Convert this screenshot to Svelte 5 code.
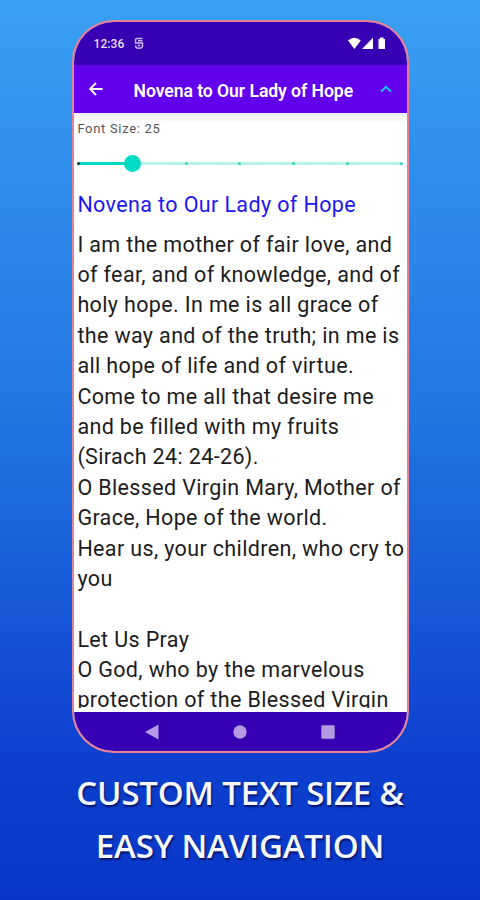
<script>
	let time = "12:36";
	let title = "Novena to Our Lady of Hope";
	let fontSize = 25;
	let ticks = [0, 1, 2, 3, 4, 5, 6];

	let lines = [
		"I am the mother of fair love, and",
		"of fear, and of knowledge, and of",
		"holy hope. In me is all grace of",
		"the way and of the truth; in me is",
		"all hope of life and of virtue.",
		"Come to me all that desire me",
		"and be filled with my fruits",
		"(Sirach 24: 24-26).",
		"O Blessed Virgin Mary, Mother of",
		"Grace, Hope of the world.",
		"Hear us, your children, who cry to",
		"you",
		"",
		"Let Us Pray",
		"O God, who by the marvelous",
		"protection of the Blessed Virgin"
	];
</script>

<main>
	<div class="phone">
		<div class="status">
			<span class="time">{time}</span>
			<svg class="notification" width="10" height="13" viewBox="0 0 10 13">
				<path
					d="M8.4 1.4H2.8Q1.5 1.4 1.5 2.8V5.9H8.5V8.4Q8.5 11.2 5 11.2Q1.5 11.2 1.5 8.4M4 3.7H8.4M3.8 8.5H6.2"
					fill="none"
					stroke="#c9b9ef"
					stroke-width="1.5"
				/>
			</svg>
			<svg class="signals" width="38" height="13" viewBox="0 0 38 13">
				<path d="M0 3.4Q6.4-1.8 12.8 3.4L6.4 12Z" />
				<path d="M14 12L25 0.8V12Z" />
				<path d="M30.5 2H32V0.6H35.5V2H37V12H30.5Z" />
			</svg>
		</div>

		<header>
			<svg class="back" width="14" height="14" viewBox="0 0 14 14">
				<path d="M13.6 7H1.4M7 1L1 7L7 13" />
			</svg>
			<h1>{title}</h1>
			<svg class="collapse" width="12" height="8" viewBox="0 0 12 8">
				<path d="M1 6.6L6 1.8L11 6.6" />
			</svg>
		</header>

		<div class="content">
			<div class="size">Font Size: {fontSize}</div>
			<div class="slider">
				<div class="fill"></div>
				{#each ticks as tick}
					<i class:first={tick === 0} style="left: {(tick / 6) * 100}%"></i>
				{/each}
				<b></b>
			</div>
			<h2>{title}</h2>
			<div class="prayer">
				{#each lines as line}
					<p>{line}</p>
				{/each}
			</div>
		</div>

		<nav>
			<svg width="14" height="16" viewBox="0 0 14 16"><path d="M0 8L13.5 0.5V15.5Z" /></svg>
			<svg width="14" height="14" viewBox="0 0 14 14"><circle cx="7" cy="7" r="6.7" /></svg>
			<svg width="14" height="14" viewBox="0 0 14 14">
				<rect x="0.3" y="0.3" width="13.4" height="13.4" rx="1" />
			</svg>
		</nav>
	</div>

	<div class="caption">
		<div>CUSTOM TEXT SIZE &amp;</div>
		<div>EASY NAVIGATION</div>
	</div>
</main>

<style>
	:global(body) {
		margin: 0;
	}
	main {
		width: 480px;
		height: 900px;
		box-sizing: border-box;
		padding-top: 20px;
		overflow: hidden;
		background: linear-gradient(#38a0f2, #2277e4 45%, #0d40cf 84%, #0837c8);
		font-family: Roboto, sans-serif;
	}
	.phone {
		width: 337px;
		height: 733px;
		margin-left: 72px;
		box-sizing: border-box;
		border: 2.5px solid #e58297;
		border-radius: 42px;
		background: #fff;
		display: flex;
		flex-direction: column;
		overflow: hidden;
	}
	.status {
		height: 43px;
		flex: none;
		display: flex;
		align-items: center;
		padding: 0 21px 0 19.5px;
		background: #3700b3;
	}
	.time {
		color: #e7dff8;
		font-size: 12px;
		font-weight: 500;
		letter-spacing: 0.1px;
	}
	.notification {
		margin-left: 10px;
	}
	.signals {
		margin-left: auto;
		fill: #fff;
	}
	header {
		height: 48px;
		flex: none;
		display: flex;
		align-items: center;
		padding: 0 15px 0 14.5px;
		background: #6200ee;
	}
	header svg {
		fill: none;
		stroke: #fff;
		stroke-width: 1.8;
	}
	header .collapse {
		margin-left: auto;
		stroke: #18cdf0;
		stroke-width: 2;
	}
	h1 {
		margin: 3px 0 0 31px;
		color: #fff;
		font-size: 17.6px;
		font-weight: 600;
		letter-spacing: -0.06px;
		white-space: nowrap;
	}
	.content {
		height: 599px;
		flex: none;
		box-sizing: border-box;
		display: flex;
		flex-direction: column;
		padding: 0 2px 4px 3.4px;
		background: linear-gradient(#eee, #fff 10px);
	}
	.size {
		height: 30px;
		flex: none;
		line-height: 32px;
		color: #555;
		font-size: 13px;
		letter-spacing: 0.68px;
	}
	.slider {
		position: relative;
		height: 3px;
		flex: none;
		margin: 19px 4px 0 1.6px;
		background: #b9f2e9;
	}
	.fill {
		width: 16.67%;
		height: 3px;
		background: #03dac5;
	}
	.slider i {
		position: absolute;
		top: 0;
		width: 3px;
		height: 3px;
		margin-left: -1.5px;
		border-radius: 50%;
		background: #2fd8bb;
	}
	.slider .first {
		background: #043b35;
	}
	.slider b {
		position: absolute;
		left: 16.67%;
		top: -7px;
		width: 17px;
		height: 17px;
		margin-left: -8.5px;
		border-radius: 50%;
		background: #03dac5;
	}
	h2 {
		flex: none;
		margin: 25px 0 9.6px;
		color: #1d16f0;
		font-size: 21.5px;
		line-height: 30px;
		font-weight: 400;
		letter-spacing: 0.38px;
		white-space: nowrap;
	}
	.prayer {
		flex: 1;
		min-height: 0;
		overflow: hidden;
		color: #1c1c1c;
		font-size: 21.5px;
		letter-spacing: 0.36px;
	}
	p {
		height: 30.4px;
		margin: 0;
		line-height: 30.4px;
		white-space: nowrap;
	}
	nav {
		flex: 1;
		display: flex;
		align-items: center;
		justify-content: center;
		gap: 74px;
		padding-right: 1px;
		background: #3700b3;
	}
	nav svg {
		fill: #b39ae3;
	}
	.caption {
		margin-top: 13px;
		color: #f7f8ff;
		font-family: "Open Sans", sans-serif;
		font-size: 33px;
		font-weight: 600;
		letter-spacing: -0.18px;
		line-height: 53px;
		text-align: center;
		white-space: nowrap;
		text-shadow: 1px 2px 2px rgba(0, 0, 60, 0.7);
	}
</style>
